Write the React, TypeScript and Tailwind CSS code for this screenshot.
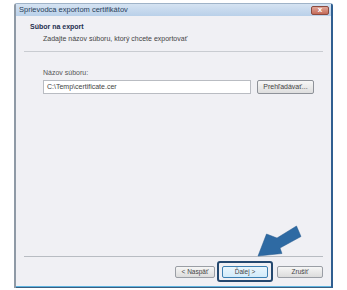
export default function App() {
  return (
    <div
      className="relative h-[290px] w-[347px] overflow-hidden bg-white"
      style={{ fontFamily: '"Liberation Sans", Arial, sans-serif' }}
    >
      <div className="ml-[14px] mt-[3px] flex h-[285px] w-[319px] flex-col rounded-t-[3px] border-l-2 border-r-2 border-t border-l-[#8f9aa6] border-r-[#2f5f91] border-t-[#9fb3c8]">
        {/* title bar */}
        <div className="flex h-[12px] items-center justify-between bg-gradient-to-b from-[#d5e3f2] to-[#b9d0e9] pl-[3px] pr-[2px]">
          <span className="text-[7.5px] leading-none text-[#2a3f5a]">
            Sprievodca exportom certifikátov
          </span>
          <div className="flex h-[9px] w-[18px] items-center justify-center rounded-[2px] border border-[#8a4a3f] bg-gradient-to-b from-[#e0a79a] to-[#c56a58]">
            <span className="text-[8px] font-bold leading-none text-white">x</span>
          </div>
        </div>

        {/* body */}
        <div className="flex flex-1 flex-col bg-[#f0f0f4]">
          <div className="pl-[14px] pt-[6px]">
            <div className="text-[7px] font-bold leading-[9px] text-[#1f2f4f]">Súbor na export</div>
            <div className="mt-[3px] pl-[13px] text-[7px] leading-[9px] text-[#444]">
              Zadajte názov súboru, ktorý chcete exportovať
            </div>
          </div>
          <div className="mx-[8px] mt-[8px] h-px bg-[#c9ccd1]" />

          <div className="pl-[27px] pt-[16px]">
            <div className="text-[7px] leading-[9px] text-[#555]">Názov súboru:</div>
            <div className="mt-[3px] flex items-center gap-[6px]">
              <div className="flex h-[14px] w-[208px] items-center border border-[#b9bcc2] bg-white pl-[3px] text-[7px] text-[#444]">
                C:\Temp\certificate.cer
              </div>
              <div className="flex h-[14px] w-[57px] items-center justify-center rounded-[2px] border border-[#8e9299] bg-gradient-to-b from-[#f7f7f7] to-[#dedede] text-[7px] text-[#444]">
                Prehľadávať...
              </div>
            </div>
          </div>

          <div className="flex-1" />
          <div className="mx-[8px] h-px bg-[#b8bcc2]" />

          <div className="flex h-[29px] items-center justify-end gap-[2px] pr-[8px]">
            <div className="flex h-[12px] w-[40px] items-center justify-center rounded-[2px] border border-[#9a9ea5] bg-gradient-to-b from-[#f6f6f6] to-[#dcdcdc] text-[6.5px] text-[#444]">
              &lt; Naspäť
            </div>
            <div className="flex h-[21px] w-[56px] items-center justify-center rounded-[3px] border-2 border-[#24486f] bg-transparent">
              <div className="flex h-[12px] w-[46px] items-center justify-center rounded-[2px] border border-[#3c7fb1] bg-gradient-to-b from-[#eaf6fd] to-[#d2ebfa] text-[6.5px] text-[#444]">
                Ďalej &gt;
              </div>
            </div>
            <div className="ml-[2px] flex h-[12px] w-[46px] items-center justify-center rounded-[2px] border border-[#9a9ea5] bg-gradient-to-b from-[#f6f6f6] to-[#dcdcdc] text-[6.5px] text-[#444]">
              Zrušiť
            </div>
          </div>
        </div>
        <div className="h-[1px] bg-[#5fb4e0]" />
        <div className="h-[1px] bg-[#3b5e80]" />
      </div>

      {/* pointer arrow */}
      <svg className="absolute left-[252px] top-[224px]" width="56" height="42" viewBox="0 0 56 42">
        <polygon
          points="6,32 14.5,10 25,14 44.5,2 49,12.5 28,24 30,29.5"
          fill="#2e6aa3"
          stroke="#24588c"
          strokeWidth="0.5"
          strokeLinejoin="round"
        />
      </svg>
    </div>
  );
}
